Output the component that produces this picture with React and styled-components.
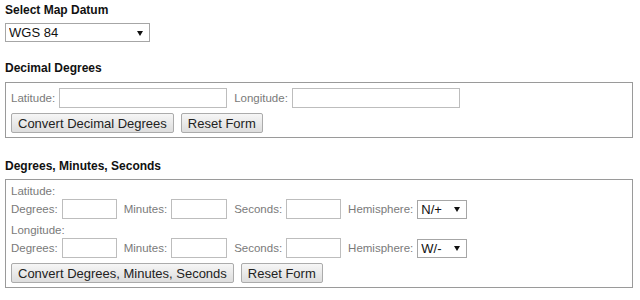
import React from 'react';
import styled, { createGlobalStyle } from 'styled-components';

const GlobalStyle = createGlobalStyle`
    body {
        margin: 0;
        background: #ffffff;
        font-family: 'Liberation Sans', Arial, sans-serif;
    }
`;

const Page = styled.div`
    display: flex;
    flex-direction: column;
    padding: 2px 7px 0 5px;
`;

const Heading = styled.div`
    font-size: 12px;
    font-weight: bold;
    line-height: 16px;
    color: #111;
    margin-top: ${(p) => p.$top || 0}px;
    margin-bottom: ${(p) => p.$bottom || 5}px;
`;

const SelectWrap = styled.div`
    position: relative;
    width: ${(p) => p.$width}px;
    height: ${(p) => p.$height || 19}px;
    flex: none;
`;

const Select = styled.select`
    appearance: none;
    box-sizing: border-box;
    width: 100%;
    height: 100%;
    margin: 0;
    padding: 0 0 0 3px;
    border: 1px solid #a6a6a6;
    border-radius: 0;
    background: #fff;
    font-family: 'Liberation Sans', Arial, sans-serif;
    font-size: 13px;
    color: #111;
    outline: none;
`;

const Arrow = styled.span`
    position: absolute;
    right: ${(p) => p.$right || 7}px;
    top: 50%;
    margin-top: -2px;
    width: 0;
    height: 0;
    border-left: 3px solid transparent;
    border-right: 3px solid transparent;
    border-top: 5px solid #111;
    pointer-events: none;
`;

const Box = styled.div`
    border: 1px solid #9a9a9a;
    padding: ${(p) => p.$padTop}px 5px 4px 5px;
    display: flex;
    flex-direction: column;
`;

const Row = styled.div`
    display: flex;
    align-items: center;
    height: 20px;
    margin-top: ${(p) => p.$top || 0}px;
`;

const Caption = styled.div`
    font-size: 11.5px;
    line-height: 15px;
    color: #7a7a7a;
    margin-top: ${(p) => p.$top || 0}px;
`;

const Label = styled.label`
    font-size: 11.5px;
    color: #7a7a7a;
    margin-right: 4px;
    white-space: nowrap;
`;

const Input = styled.input`
    box-sizing: border-box;
    width: ${(p) => p.$width}px;
    height: 20px;
    margin: 0 7px 0 0;
    padding: 0 3px;
    border: 1px solid #bdbdbd;
    border-radius: 0;
    background: #fff;
    font-size: 13px;
    outline: none;
    flex: none;
`;

const Button = styled.button`
    box-sizing: border-box;
    height: 20px;
    margin: 0 7px 0 0;
    padding: 0 6px;
    border: 1px solid #ababab;
    border-radius: 2px;
    background: linear-gradient(#f6f6f6, #dddddd);
    font-family: 'Liberation Sans', Arial, sans-serif;
    font-size: 13px;
    color: #222;
    white-space: nowrap;
    cursor: pointer;
`;

const HemisphereSelect = ({ value }) => (
    <SelectWrap $width={50} $height={19}>
        <Select defaultValue={value}>
            <option>{value}</option>
        </Select>
        <Arrow $right={7} />
    </SelectWrap>
);

const DmsRow = ({ hemisphere }) => (
    <Row>
        <Label>Degrees:</Label>
        <Input $width={55} />
        <Label>Minutes:</Label>
        <Input $width={56} />
        <Label>Seconds:</Label>
        <Input $width={55} />
        <Label>Hemisphere:</Label>
        <HemisphereSelect value={hemisphere} />
    </Row>
);

const App = () => {
    return (
        <Page>
            <GlobalStyle />
            <Heading>Select Map Datum</Heading>
            <SelectWrap $width={145}>
                <Select defaultValue="WGS 84">
                    <option>WGS 84</option>
                    <option>NAD 83</option>
                    <option>NAD 27</option>
                </Select>
                <Arrow $right={7} />
            </SelectWrap>

            <Heading $top={18} $bottom={6}>Decimal Degrees</Heading>
            <Box $padTop={5}>
                <Row>
                    <Label>Latitude:</Label>
                    <Input $width={168} />
                    <Label>Longitude:</Label>
                    <Input $width={168} />
                </Row>
                <Row $top={5}>
                    <Button>Convert Decimal Degrees</Button>
                    <Button>Reset Form</Button>
                </Row>
            </Box>

            <Heading $top={20} $bottom={5}>Degrees, Minutes, Seconds</Heading>
            <Box $padTop={4}>
                <Caption>Latitude:</Caption>
                <DmsRow hemisphere="N/+" />
                <Caption $top={4}>Longitude:</Caption>
                <DmsRow hemisphere="W/-" />
                <Row $top={5}>
                    <Button>Convert Degrees, Minutes, Seconds</Button>
                    <Button>Reset Form</Button>
                </Row>
            </Box>
        </Page>
    );
};

export default App;
